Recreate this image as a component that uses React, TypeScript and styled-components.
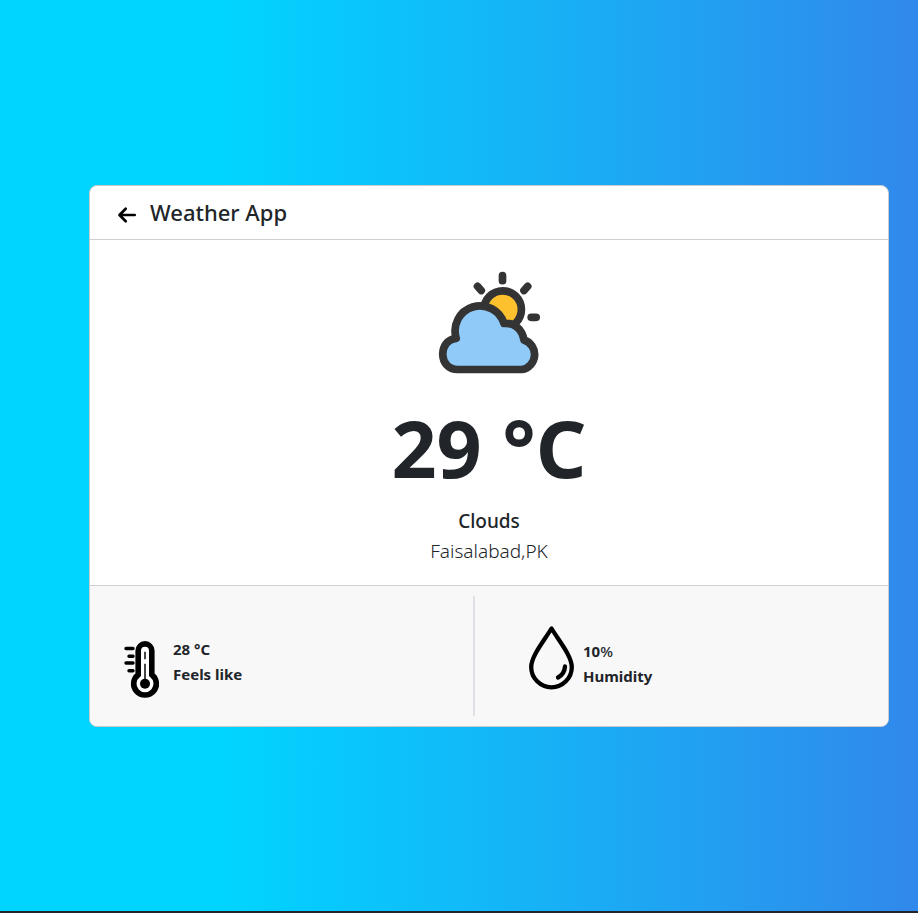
import React from "react";
import styled, { createGlobalStyle } from "styled-components";

const GlobalStyle = createGlobalStyle`
  *, *::before, *::after { box-sizing: border-box; }
  body {
    margin: 0;
    color: #212529;
    font-family: "Segoe UI", "Noto Sans", "Open Sans", sans-serif;
    font-size: 16px;
    line-height: 24px;
  }
`;

const Page = styled.main`
  min-height: 100vh;
  display: grid;
  align-items: center;
  padding: 0 29px 0 89px;
  background: linear-gradient(90deg, #00d5ff 24%, #3188eb 100%);
  border-bottom: 2px solid #20242b;
`;

const Card = styled.article`
  width: 100%;
  max-width: 800px;
  background: #fff;
  border: 1px solid #c8cacc;
  border-radius: 8px;
  overflow: hidden;
`;

const Header = styled.header`
  display: flex;
  align-items: center;
  gap: 13px;
  padding: 12px 26px;
  border-bottom: 1px solid #cfd0d1;
`;

const BackButton = styled.button`
  display: flex;
  margin: 6px 0 0;
  padding: 0;
  border: 0;
  background: none;
  color: #000;
  cursor: pointer;
`;

const Title = styled.h1`
  margin: 0;
  font-size: 22px;
  font-weight: 500;
  line-height: 29px;
`;

const Summary = styled.section`
  display: flex;
  flex-direction: column;
  align-items: center;
  padding: 25px 16px 19px;
`;

const Temperature = styled.p`
  margin: 23px 0 10px;
  font-size: 79px;
  font-weight: 700;
  line-height: 96px;
`;

const Condition = styled.h2`
  margin: 0;
  font-size: 19px;
  font-weight: 500;
  line-height: 30px;
`;

const Place = styled.p`
  margin: 0;
  font-size: 19px;
  font-weight: 300;
  line-height: 30px;
`;

const Footer = styled.footer`
  display: grid;
  grid-template-columns: 385fr 413fr;
  padding: 10px 0;
  background: #f8f8f8;
  border-top: 1px solid #cfd0d1;
`;

const Metric = styled.section<{ $divided?: boolean; $inset: number; $gap: number }>`
  display: flex;
  align-items: flex-start;
  gap: ${(p) => p.$gap}px;
  min-height: 120px;
  padding-left: ${(p) => p.$inset}px;
  border-right: ${(p) => (p.$divided ? "2px solid #dee2e6" : "0")};
`;

const MetricIcon = styled.span<{ $top: number }>`
  display: flex;
  padding-top: ${(p) => p.$top}px;
`;

const MetricText = styled.dl<{ $top: number }>`
  display: flex;
  flex-direction: column-reverse;
  margin: 0;
  padding-top: ${(p) => p.$top}px;
  font-size: 15px;
  font-weight: 700;
  line-height: 25px;
  dd { margin: 0; }
`;

const Light = styled.span`
  font-weight: 500;
`;

const ArrowIcon = () => (
  <svg width="21" height="20" viewBox="0 0 21 20" fill="none" stroke="currentColor" strokeWidth="2.7" strokeLinecap="round" strokeLinejoin="round" aria-hidden="true">
    <path d="M18.700 10H4M9.700 3.700 3.500 10l6.200 6.300" />
  </svg>
);

const PartlyCloudy = () => (
  <svg width="112" height="112" viewBox="0 0 112 112" role="img" aria-label="Partly cloudy">
    <g stroke="#343434" strokeWidth="7.700" strokeLinecap="round" strokeLinejoin="round">
      <path d="M69.500 10.700v5M44.500 21.300l3.700 4.200M94.700 21.300l-3.700 4.200M98.200 52.300h5" fill="none" />
      <circle cx="69.700" cy="44.500" r="18.700" fill="#fcc12d" />
      <path d="M24.300 104.500H88.300A15.200 15.200 0 0 0 90.500 75C88.500 64 81 57.500 70.500 58.500A24.800 24.800 0 0 0 22.700 73.300C4.500 75 4.500 104.500 24.300 104.500Z" fill="#90caf9" transform="translate(.5 0)" />
    </g>
  </svg>
);

const Thermometer = () => (
  <svg width="36" height="58" viewBox="0 0 36 58" role="img" aria-label="Temperature">
    <path d="M14.200 33.700V9.700a6.800 6.800 0 0 1 13.600 0v24a11.300 11.300 0 1 1-13.600 0Z" fill="#fff" stroke="#000" strokeWidth="5.600" />
    <path d="M2 7.500H9M5 15.300H9M2 22H9M5 29.700H9" stroke="#000" strokeWidth="3.400" strokeLinecap="round" />
    <path d="M21 10.700v7.600M21 22.700v17" stroke="#333" strokeWidth="1.800" />
    <circle cx="21" cy="42.700" r="5" />
  </svg>
);

const Drop = () => (
  <svg width="46" height="64" viewBox="0 0 46 64" fill="none" stroke="#000" strokeWidth="4.300" strokeLinecap="round" strokeLinejoin="round" role="img" aria-label="Humidity">
    <path d="M22.500 2.500C15.500 14 2.200 30 2.200 41a20.300 20.300 0 0 0 40.600 0C42.800 30 29.500 14 22.500 2.500Z" />
    <path d="M36 40.500Q35.500 48 29 51.500" />
  </svg>
);

export default function App() {
  return (
    <>
      <GlobalStyle />
      <Page>
        <Card>
          <Header>
            <BackButton type="button" aria-label="Back"><ArrowIcon /></BackButton>
            <Title>Weather App</Title>
          </Header>
          <Summary>
            <PartlyCloudy />
            <Temperature>29 °C</Temperature>
            <Condition>Clouds</Condition>
            <Place>Faisalabad,PK</Place>
          </Summary>
          <Footer>
            <Metric $divided $inset={34} $gap={13}>
              <MetricIcon $top={45}><Thermometer /></MetricIcon>
              <MetricText $top={41}>
                <dt>Feels like</dt>
                <dd>28 °C</dd>
              </MetricText>
            </Metric>
            <Metric $inset={54} $gap={8}>
              <MetricIcon $top={30}><Drop /></MetricIcon>
              <MetricText $top={43}>
                <dt>Humidity</dt>
                <dd>10<Light>%</Light></dd>
              </MetricText>
            </Metric>
          </Footer>
        </Card>
      </Page>
    </>
  );
}
